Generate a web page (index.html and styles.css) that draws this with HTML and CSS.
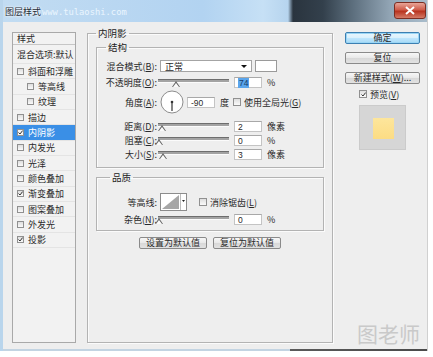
FILE: index.html
```html
<!DOCTYPE html>
<html>
<head>
    <meta charset="utf-8">
    <link rel="stylesheet" href="styles.css">
</head>
<body>
<div class="window">
    <div class="titlebar">
        <span class="title">图层样式</span>
        <span class="site">www.tulaoshi.com</span>
        <span class="close">
            <svg width="12" height="9" viewBox="0 0 12 9"><path d="M2 1 L10 8 M10 1 L2 8" stroke="#ffffff" stroke-width="2"/></svg>
        </span>
    </div>

    <div class="client">
        <div class="styles-list">
            <div class="list-head">样式</div>
            <div class="list-row blend">混合选项:默认</div>
            <div class="list-row"><span class="check"></span>斜面和浮雕</div>
            <div class="list-row sub"><span class="check"></span>等高线</div>
            <div class="list-row sub"><span class="check"></span>纹理</div>
            <div class="list-row"><span class="check"></span>描边</div>
            <div class="list-row selected"><span class="check on"><svg width="5" height="5" viewBox="0 0 5 5"><path d="M0.5 2.5 L2 4 L4.6 0.6" fill="none" stroke="#333" stroke-width="1"/></svg></span>内阴影</div>
            <div class="list-row"><span class="check"></span>内发光</div>
            <div class="list-row"><span class="check"></span>光泽</div>
            <div class="list-row"><span class="check"></span>颜色叠加</div>
            <div class="list-row"><span class="check on"><svg width="5" height="5" viewBox="0 0 5 5"><path d="M0.5 2.5 L2 4 L4.6 0.6" fill="none" stroke="#333" stroke-width="1"/></svg></span>渐变叠加</div>
            <div class="list-row"><span class="check"></span>图案叠加</div>
            <div class="list-row"><span class="check"></span>外发光</div>
            <div class="list-row"><span class="check on"><svg width="5" height="5" viewBox="0 0 5 5"><path d="M0.5 2.5 L2 4 L4.6 0.6" fill="none" stroke="#333" stroke-width="1"/></svg></span>投影</div>
        </div>

        <fieldset class="group main">
            <legend>内阴影</legend>

            <fieldset class="group structure">
                <legend>结构</legend>
                <div class="row">
                    <span class="label">混合模式(<u>B</u>):</span>
                    <span class="select">正常<span class="arrow"></span></span>
                    <span class="swatch"></span>
                </div>
                <div class="row gap4">
                    <span class="label">不透明度(<u>O</u>):</span>
                    <span class="slider"><span class="thumb" style="left: 14px"></span></span>
                    <span class="value"><span class="picked">74</span></span>
                    <span class="unit">%</span>
                </div>
                <div class="row angle">
                    <span class="label">角度(<u>A</u>):</span>
                    <svg class="dial" width="24" height="24" viewBox="0 0 24 24">
                        <circle cx="12" cy="12" r="11" fill="#ffffff" stroke="#8c8c8c"/>
                        <line x1="12" y1="12" x2="12" y2="21" stroke="#333333" stroke-width="1.2"/>
                        <circle cx="12" cy="12" r="1.3" fill="#333333"/>
                    </svg>
                    <span class="value narrow">-90</span>
                    <span class="unit">度</span>
                    <span class="check field"></span>
                    <span class="field-text">使用全局光(<u>G</u>)</span>
                </div>
                <div class="row gap6">
                    <span class="label">距离(<u>D</u>):</span>
                    <span class="slider"><span class="thumb" style="left: 0px"></span></span>
                    <span class="value">2</span>
                    <span class="unit">像素</span>
                </div>
                <div class="row gap2">
                    <span class="label">阻塞(<u>C</u>):</span>
                    <span class="slider"><span class="thumb" style="left: -3px"></span></span>
                    <span class="value">0</span>
                    <span class="unit">%</span>
                </div>
                <div class="row gap2">
                    <span class="label">大小(<u>S</u>):</span>
                    <span class="slider"><span class="thumb" style="left: 1px"></span></span>
                    <span class="value">3</span>
                    <span class="unit">像素</span>
                </div>
            </fieldset>

            <fieldset class="group quality">
                <legend>品质</legend>
                <div class="row contour-row">
                    <span class="label">等高线:</span>
                    <svg class="contour" width="27" height="18" viewBox="0 0 27 18">
                        <rect x="0.5" y="0.5" width="26" height="17" fill="#ffffff" stroke="#8c8c8c"/>
                        <polygon points="2,16 19,2 19,16" fill="#a6a6a6"/>
                        <line x1="20.5" y1="1" x2="20.5" y2="17" stroke="#bdbdbd"/>
                        <polygon points="22,7 25,7 23.5,9" fill="#222222"/>
                    </svg>
                    <span class="check field"></span>
                    <span class="field-text">消除锯齿(<u>L</u>)</span>
                </div>
                <div class="row gap2">
                    <span class="label">杂色(<u>N</u>):</span>
                    <span class="slider"><span class="thumb" style="left: -3px"></span></span>
                    <span class="value">0</span>
                    <span class="unit">%</span>
                </div>
            </fieldset>

            <div class="defaults">
                <span class="button">设置为默认值</span>
                <span class="button">复位为默认值</span>
            </div>
        </fieldset>

        <div class="actions">
            <span class="button default">确定</span>
            <span class="button">复位</span>
            <span class="button">新建样式(<u>W</u>)...</span>
            <div class="preview-toggle">
                <span class="check on"><svg width="5" height="5" viewBox="0 0 5 5"><path d="M0.5 2.5 L2 4 L4.6 0.6" fill="none" stroke="#333" stroke-width="1"/></svg></span>
                <span>预览(<u>V</u>)</span>
            </div>
            <div class="preview"><div class="preview-chip"></div></div>
            <div class="watermark">图老师</div>
        </div>
    </div>
    <div class="bottom-edge"></div>
</div>
</body>
</html>
```

FILE: styles.css
```css
body {
    margin: 0;
    background: #ffffff;
    font-family: "Noto Sans CJK SC", "Liberation Sans", sans-serif;
    font-size: 9px;
    color: #2a2a2a;
}

u {
    text-decoration: underline;
}

.window {
    width: 424px;
    border-left: 3px solid #b9d5ec;
    border-right: 1px solid #d0d0d0;
    background: #eeeeee;
}

/* title bar */

.titlebar {
    position: relative;
    display: flex;
    align-items: center;
    height: 22px;
    padding-left: 2px;
    background: linear-gradient(to right, #c2dcf2 0, #b2d3f1 200px, #c6e0f5 260px, #b6d4ee 285px, #2a343e 290px, #33404c 320px, #5d6f7e 350px, #93a6b6 388px, #a9bccb 424px);
}

.title {
    font-size: 9px;
    color: #1c2a38;
    text-shadow: 0 0 3px #ffffff, 0 0 2px #ffffff;
}

.site {
    position: absolute;
    left: 39px;
    top: 7px;
    font-family: "DejaVu Sans Mono", monospace;
    font-size: 8.8px;
    line-height: 11px;
    color: #eaf5fe;
}

.close {
    display: flex;
    align-items: center;
    justify-content: center;
    margin-left: auto;
    margin-right: 1px;
    margin-bottom: 2px;
    width: 32px;
    height: 17px;
    box-sizing: border-box;
    border: 1px solid #7c2d22;
    border-radius: 3px;
    background: linear-gradient(#e8a598, #cf5c4a 45%, #b8331f 55%, #d47a66);
}

/* dialog body */

.client {
    display: flex;
    align-items: flex-start;
    height: 327px;
    box-sizing: border-box;
    padding: 5px 0 0 9px;
}

.styles-list {
    width: 64px;
    height: 311px;
    box-sizing: border-box;
    margin-top: 5px;
    border: 1px solid #a9a9a9;
    background: #f2f2f2;
    font-size: 9px;
}

.list-head {
    height: 12px;
    line-height: 11px;
    padding-left: 4px;
    box-sizing: border-box;
    border-bottom: 1px solid #c6c6c6;
}

.list-row {
    display: flex;
    align-items: center;
    height: 15.35px;
    box-sizing: border-box;
    padding-left: 4px;
    border-bottom: 1px solid #e4e4e4;
}

.list-row.blend {
    height: 19px;
}

.list-row.sub {
    padding-left: 14px;
}

.list-row.selected {
    background: #3a8fe6;
    color: #ffffff;
}

.check {
    display: inline-flex;
    align-items: center;
    justify-content: center;
    flex: none;
    width: 5px;
    height: 5px;
    margin-right: 4px;
    border: 1px solid #909090;
    background: linear-gradient(#dedede, #fafafa);
}

.selected .check {
    background: #f4f4f4;
}

/* group boxes */

.group {
    margin: 0;
    min-width: 0;
    box-sizing: border-box;
    border: 1px solid #b3b3b3;
    box-shadow: inset 1px 1px 0 #fbfbfb, 1px 1px 0 #fbfbfb;
}

.group legend {
    padding: 0 2px;
    font-size: 9.5px;
    line-height: 12px;
    color: #222222;
}

.main {
    width: 246px;
    height: 316px;
    margin-left: 11px;
    padding: 2px 8px 0;
}

.structure {
    padding: 7px 0 7px;
}

.structure legend {
    margin-left: 9px;
}

.quality {
    margin-top: 3px;
    padding: 10px 0 5px;
}

.quality legend {
    margin-left: 13px;
}

.row {
    display: flex;
    align-items: center;
    height: 12px;
}

.gap2 {
    margin-top: 2px;
}

.gap4 {
    margin-top: 4px;
}

.gap6 {
    margin-top: 6px;
}

.row.angle {
    height: 24px;
    margin-top: 2px;
}

.row.contour-row {
    height: 18px;
}

.label {
    flex: none;
    width: 60px;
    margin-right: 3px;
    text-align: right;
    white-space: nowrap;
}

.select {
    position: relative;
    width: 92px;
    height: 12px;
    box-sizing: border-box;
    padding-left: 4px;
    line-height: 11px;
    border: 1px solid #a4a4a4;
    background: #ffffff;
}

.arrow {
    position: absolute;
    right: 4px;
    top: 4px;
    border-left: 3px solid transparent;
    border-right: 3px solid transparent;
    border-top: 3px solid #111111;
}

.swatch {
    width: 22px;
    height: 12px;
    box-sizing: border-box;
    margin-left: 3px;
    border: 1px solid #9a9a9a;
    background: #ffffff;
}

.slider {
    position: relative;
    flex: none;
    align-self: stretch;
    width: 71px;
    margin-left: -2px;
}

.slider::before {
    content: "";
    display: block;
    margin-top: 3px;
    height: 2px;
    border-top: 1px solid #6e6e6e;
    border-bottom: 1px solid #fbfbfb;
    background: #a3a3a3;
}

.thumb {
    position: absolute;
    top: 5px;
    width: 0;
    height: 0;
    border-left: 4px solid transparent;
    border-right: 4px solid transparent;
    border-bottom: 6px solid #666666;
}

.thumb::after {
    content: "";
    position: absolute;
    left: -3px;
    top: 1.5px;
    border-left: 3px solid transparent;
    border-right: 3px solid transparent;
    border-bottom: 4px solid #fafafa;
}

.value {
    flex: none;
    width: 28px;
    height: 11px;
    box-sizing: border-box;
    margin-left: 5px;
    padding-left: 3px;
    font-family: "Liberation Sans", sans-serif;
    font-size: 8.5px;
    line-height: 10px;
    border: 1px solid #c4c4c4;
    border-top-color: #a8a8a8;
    background: #ffffff;
}

.value.narrow {
    margin-left: 3px;
}

.picked {
    display: inline-block;
    padding: 0 1px;
    background: #5aa5ec;
    color: #163b68;
}

.unit {
    margin-left: 5px;
    font-size: 9px;
}

.dial {
    flex: none;
}

.check.field {
    width: 6px;
    height: 6px;
    margin-left: 4px;
    margin-right: 3px;
}

.contour + .check.field {
    margin-left: 12px;
}

.field-text {
    white-space: nowrap;
}

.defaults {
    display: flex;
    justify-content: center;
    gap: 6px;
    margin-top: 6px;
}

/* buttons */

.button {
    display: block;
    height: 12px;
    box-sizing: border-box;
    line-height: 10px;
    text-align: center;
    font-size: 9px;
    border: 1px solid #8a8a8a;
    border-radius: 2px;
    background: linear-gradient(#f7f7f7, #e8e8e8 50%, #d8d8d8 51%, #e2e2e2);
    white-space: nowrap;
}

.defaults .button {
    width: 68px;
}

.actions {
    display: flex;
    flex-direction: column;
    width: 75px;
    height: 311px;
    margin-top: 5px;
    margin-left: 12px;
}

.actions .button {
    margin-bottom: 8px;
}

.actions .button:nth-child(3) {
    margin-bottom: 6px;
}

.button.default {
    border-color: #3c7fb1;
    box-shadow: inset 0 0 0 1px #9ad6f6;
    background: linear-gradient(#eaf6fd, #d9f0fc 50%, #bee6fd 51%, #a7d9f5);
}

.preview-toggle {
    display: flex;
    align-items: center;
    height: 8px;
    padding-left: 14px;
}

.preview-toggle .check {
    width: 6px;
    height: 6px;
    margin-right: 3px;
}

.preview {
    align-self: center;
    width: 47px;
    height: 45px;
    box-sizing: border-box;
    margin-top: 7px;
    padding: 12px 0 0 13px;
    border: 1px solid #cbcbcb;
    background: #d6d6d6;
}

.preview-chip {
    width: 21px;
    height: 21px;
    background: linear-gradient(#fde69c, #fcdc84);
}

.watermark {
    margin-top: auto;
    text-align: right;
    font-size: 21px;
    line-height: 21px;
    color: #c9c9c9;
    margin-bottom: -1px;
}

.bottom-edge {
    height: 2px;
    background: linear-gradient(to right, #c3d4e2 0, #c3d4e2 287px, #5a5a5a 287px, #4a4a4a 424px);
}
```
